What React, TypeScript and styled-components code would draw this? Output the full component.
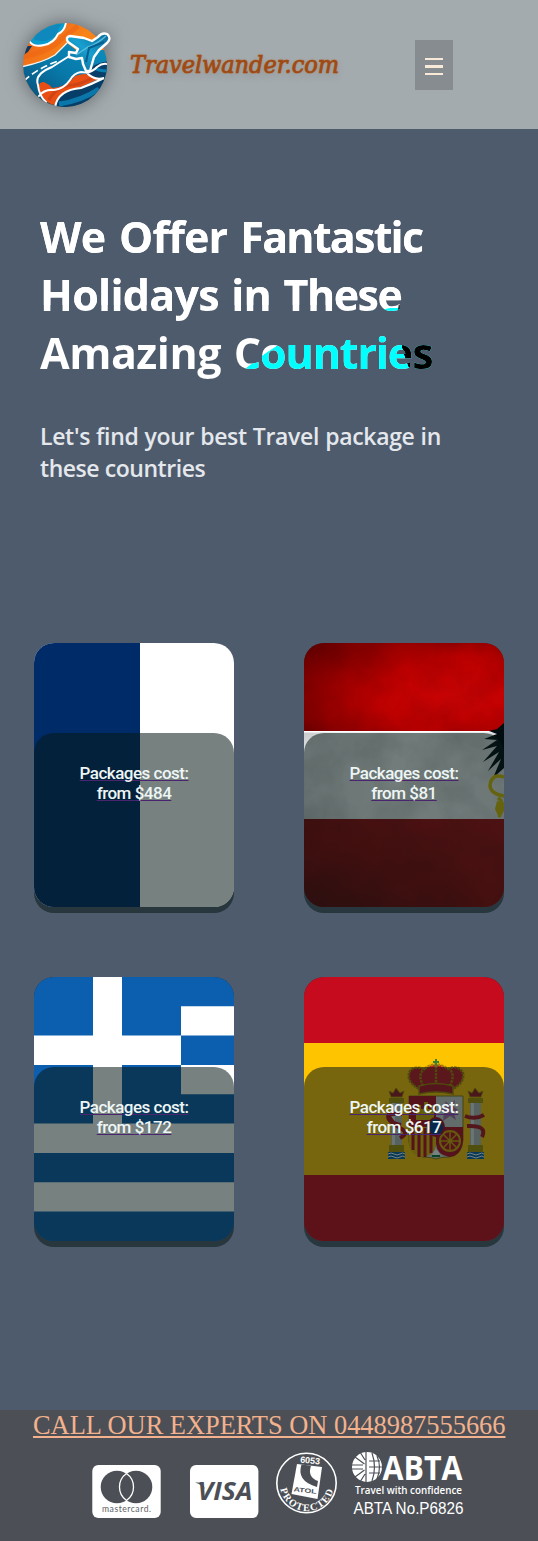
import React from "react";
import styled, { createGlobalStyle } from "styled-components";

const GlobalStyle = createGlobalStyle`
  * { box-sizing: border-box; }
  body { margin: 0; background: #4e5b6c; }
`;

const Page = styled.div`
  display: flex;
  flex-direction: column;
  width: 538px;
  height: 1541px;
  background: #4e5b6c;
  overflow: hidden;
`;

const Header = styled.header`
  display: flex;
  align-items: center;
  flex: none;
  height: 129px;
  padding-left: 20px;
  background: #a4abae;
`;

const LogoMark = styled.svg`
  flex: none;
  width: 92px;
  height: 90px;
  filter: drop-shadow(0 0 9px rgba(50, 55, 60, 0.6));
`;

const Brand = styled.span`
  width: 285px;
  padding-left: 18px;
  font: italic 500 25px/32px "DejaVu Serif", serif;
  font-stretch: condensed;
  letter-spacing: -0.05px;
  color: #9f4a15;
  -webkit-text-stroke: 0.7px #9f4a15;
  text-shadow: 0 0 2px #b8763c, 0 4px 7px rgba(60, 60, 60, 0.2);
  white-space: nowrap;
`;

const MenuButton = styled.button`
  display: flex;
  flex-direction: column;
  align-items: center;
  justify-content: center;
  gap: 5px;
  margin-left: 18px;
  width: 38px;
  height: 50px;
  padding: 4px 0 0;
  border: 0;
  background: #878c90;
`;

const MenuBar = styled.span`
  width: 18px;
  height: 2.4px;
  background: #f8e9d8;
`;

const Hero = styled.section`
  flex: none;
  height: 514px;
  padding: 79px 40px 0;
`;

const Title = styled.h1`
  margin: 0;
  height: 180px;
  font: 700 43px/58px "Open Sans", sans-serif;
  color: transparent;
  background:
    linear-gradient(#fff 97px, transparent 97px),
    radial-gradient(circle 135px at 493px 107px, #000 134.5px, transparent 135px),
    radial-gradient(circle 259px at 373px 358px, #0ff 258.5px, transparent 259px),
    #fff;
  -webkit-background-clip: text;
  background-clip: text;
`;

const Line = styled.span<{ $spacing?: number; $words?: number }>`
  display: block;
  letter-spacing: ${(p) => p.$spacing ?? 0}px;
  word-spacing: ${(p) => p.$words ?? 0}px;
  white-space: nowrap;
`;

const Word = styled.span<{ $spacing: number }>`
  letter-spacing: ${(p) => p.$spacing}px;
`;

const Subtitle = styled.p`
  margin: 32px 0 0;
  font: 600 23px/32px "Open Sans", sans-serif;
  color: #e4e8ec;
`;

const Cards = styled.main`
  display: grid;
  flex: none;
  grid-template-columns: 200px 200px;
  grid-auto-rows: 270px;
  gap: 64px 70px;
  height: 767px;
  padding-left: 34px;
`;

const Card = styled.a`
  display: grid;
  height: 270px;
  border-radius: 20px;
  background: #28363d;
  text-decoration: none;
`;

const Face = styled.div`
  display: grid;
  grid-template-rows: 264px;
  grid-template-columns: 200px;
  height: 264px;
  border-radius: 20px;
  overflow: hidden;
`;

const Flag = styled.svg`
  grid-area: 1 / 1;
  width: 200px;
  height: 264px;
`;

const Price = styled.div`
  grid-area: 1 / 1;
  z-index: 1;
  align-self: end;
  height: 174px;
  padding-top: 30px;
  border-radius: 20px 20px 0 0;
  background: rgba(8, 26, 24, 0.55);
  font: 500 17px/20px Roboto, sans-serif;
  letter-spacing: -0.5px;
  text-align: center;
  color: #edf6f5;
  text-decoration: underline;
  text-decoration-color: #4b2470;
  text-decoration-thickness: 1px;
  text-decoration-skip-ink: none;
`;

const Footer = styled.footer`
  flex: 1;
  background: #4c5056;
`;

const Phone = styled.a`
  display: block;
  margin-left: 33px;
  font: 26.4px/30px "Liberation Serif", serif;
  color: #f3b28d;
  text-decoration: underline;
  white-space: nowrap;
`;

const Badges = styled.div`
  display: flex;
  align-items: flex-start;
  padding: 11px 0 0 92px;
`;

const PayBadge = styled.svg`
  width: 69px;
  height: 54px;
  margin: 14px 29px 0 0;
`;

const Atol = styled.svg`
  width: 62px;
  height: 62px;
  margin: 1px 14px 0 -12px;
`;

const Abta = styled.svg`
  width: 114px;
  height: 70px;
  overflow: visible;
`;

const Logo = () => (
  <LogoMark viewBox="0 0 92 90">
    <defs>
      <clipPath id="globe"><circle cx="45" cy="45" r="42" /></clipPath>
      <linearGradient id="orange" x1="0" y1="0" x2="1" y2="1">
        <stop offset="0" stopColor="#e65518" /><stop offset=".45" stopColor="#f98518" /><stop offset="1" stopColor="#df6b13" />
      </linearGradient>
      <linearGradient id="sea" x1="0" y1="1" x2="1" y2="0">
        <stop offset="0" stopColor="#0a426b" /><stop offset=".5" stopColor="#0878a8" /><stop offset="1" stopColor="#0a8fc0" />
      </linearGradient>
      <linearGradient id="plane" x1="1" y1="0" x2="0" y2="1">
        <stop offset="0" stopColor="#0b6795" /><stop offset=".5" stopColor="#17a0d0" /><stop offset="1" stopColor="#0a5b8b" />
      </linearGradient>
    </defs>
    <g clipPath="url(#globe)">
      <rect width="92" height="90" fill="url(#orange)" />
      <path d="M2 37Q24 33 36 24Q46 15 58 6" fill="none" stroke="#ee6514" strokeWidth="5" opacity=".6" />
      <path d="M0 47Q24 42 35 35L47 23L56 30L92 30V90H0z" fill="url(#sea)" />
      <path d="M0 26H12L8 32L2 36z" fill="#12395c" />
      <path d="M1 47Q24 42 35 35L47 23" fill="none" stroke="#f4f5f2" strokeWidth="1.4" />
      <path d="M6 0H46Q44 12 36 16Q29 26 18 26Q9 25 9 20z" fill="#079dcd" />
      <path d="M14 20Q16 11 25 9Q32 4 42 4Q37 9 38 14Q29 22 21 21z" fill="#1579b0" opacity=".55" />
      <path d="M46 2Q45 11 38 14Q34 23 24 25Q12 28 9 20" fill="none" stroke="#fff" strokeWidth="2" />
      <path d="M4 61Q16 49 38 41" fill="none" stroke="#fff" strokeWidth="1.7" strokeDasharray="7 3.5" />
      <path d="M20 73Q16 62 24 62Q29 64 32 68Q47 67 55 56Q68 51 80 58Q65 66 54 69Q38 73 35 85Q26 84 20 73z" fill="#e94e13" />
      <path d="M29 80Q37 65 54 65Q65 63 75 56" fill="none" stroke="#b83d18" strokeWidth="3" opacity=".55" />
      <path d="M34 90Q38 74 53 70Q68 67 82 58H92V90z" fill="#073e67" />
      <path d="M39 84Q61 81 79 69" fill="none" stroke="#0a76aa" strokeWidth="5" />
      <path d="M64 53Q75 42 90 41V59Q76 60 64 53z" fill="#093e68" />
      <path d="M75 48Q79 51 87 51" stroke="#087eb2" strokeWidth="3" fill="none" />
      <path d="M51 35Q43 40 32 47Q14 54 18 65Q19 76 26 82M19 76Q24 69 34 70Q44 69 50 60Q54 53 61 52Q71 54 77 47Q82 43 87 44M66 52Q74 61 84 58Q72 64 61 68Q37 70 35 88" fill="none" stroke="#fff" strokeWidth="2" strokeLinecap="round" />
    </g>
    <path d="M87 14Q82 12 78 17L72 21L64 18L50 16Q45 17 48 22L58 29L56 33L49 32L49 37L56 39L62 38L63 44L66 51H70L72 44L74 37L79 30L87 23Q92 18 87 14z" fill="url(#plane)" stroke="#fff" strokeWidth="2.4" strokeLinejoin="round" />
    <path d="M86 16Q77 24 68 27L56 35" stroke="#58bcdd" strokeWidth="1.5" fill="none" />
    <path d="M84 22L69 28L66 42" stroke="#075f8e" strokeWidth="2" fill="none" />
  </LogoMark>
);

const FranceFlag = () => (
  <Flag viewBox="0 0 200 264">
    <rect width="200" height="264" fill="#fff" /><rect width="106" height="264" fill="#002b69" />
  </Flag>
);

const AustriaFlag = () => (
  <Flag viewBox="0 0 200 264">
    <defs>
      <radialGradient id="redCloth" cx="75%" cy="60%" r="90%">
        <stop offset="0" stopColor="#d00405" /><stop offset=".5" stopColor="#b80000" /><stop offset="1" stopColor="#6c0000" />
      </radialGradient>
      <linearGradient id="lowCloth" x1="1" y1="0" x2="0" y2="1">
        <stop offset="0" stopColor="#a8090f" /><stop offset=".5" stopColor="#900507" /><stop offset="1" stopColor="#600407" />
      </linearGradient>
      <linearGradient id="paper"><stop offset="0" stopColor="#dfe0e1" /><stop offset=".5" stopColor="#f5f5f5" /><stop offset="1" stopColor="#e8e9ea" /></linearGradient>
      <filter id="grain"><feTurbulence type="fractalNoise" baseFrequency=".025" numOctaves="5" seed="8" /><feColorMatrix values="0 0 0 0 0 0 0 0 0 0 0 0 0 0 0 .75 0 0 0 -.22" /></filter>
    </defs>
    <rect width="200" height="88" fill="url(#redCloth)" />
    <rect y="88" width="200" height="88" fill="url(#paper)" />
    <rect y="176" width="200" height="88" fill="url(#lowCloth)" />
    <rect width="200" height="264" filter="url(#grain)" opacity=".32" />
    <path d="M0 88.7H200" stroke="#fff" strokeWidth="1.5" />
    <path d="M200 80L193 86L185 88L193 91L180 96L193 97L178 107L193 103L179 119L195 109L184 128L197 116L189 135L200 125z" fill="#000b10" />
    <path d="M200 134Q187 130 186 143Q187 151 200 153M194 155Q202 160 195 174" fill="none" stroke="#d8bd00" strokeWidth="3.5" />
    <path d="M193 158L200 160V168L195 175L191 166z" fill="#d8bd00" />
  </Flag>
);

const GreeceFlag = () => (
  <Flag viewBox="0 0 200 264">
    <rect width="200" height="264" fill="#0c5eae" />
    <path d="M147 29.3H200V58.6H147zM147 88H200V117.3H147zM0 146.6H200V176H0zM0 205.3H200V234.6H0zM59 0H88V147H59zM0 58.6H147V88H0z" fill="#fff" />
  </Flag>
);

const Pillar = ({ x }: { x: number }) => (
  <g transform={`translate(${x} 111)`}>
    <path d="M3 12H14V59H3z" fill="#b9bbb8" /><path d="M4 14H7V58H4z" fill="#e2e2df" />
    <path d="M1 10H16V15H1zM1 57H16V64H1z" fill="#aa9100" />
    <path d="M0 64H17V71H0z" fill="#0b63a6" />
    <path d="M0 66Q3 64 6 66T12 66T17 66M0 69Q3 67 6 69T12 69T17 69" stroke="#fff" fill="none" />
    <path d="M3 9L1 3L5 5L8 0L12 5L16 3L14 9z" fill="#9c1421" stroke="#a98b00" />
  </g>
);

const SpainFlag = () => (
  <Flag viewBox="0 0 200 264">
    <rect width="200" height="264" fill="#c60b1e" /><rect y="66" width="200" height="132" fill="#ffc400" />
    <Pillar x={84} /><Pillar x={163} />
    <path d="M84 138Q89 147 96 151Q106 156 96 161M98 137L85 137Q81 145 97 148" fill="none" stroke="#ae1320" strokeWidth="4" />
    <path d="M161 139Q171 143 180 138M163 149Q184 148 178 160" fill="none" stroke="#ae1320" strokeWidth="4" />
    <path d="M105 119H159V163Q158 179 145 180Q136 180 132 182Q127 180 119 180Q107 178 105 165z" fill="#d0d0d0" stroke="#8a7812" />
    <path d="M105 119H132V150H105zM132 150H159V164Q157 179 145 180Q133 178 132 167z" fill="#b80d20" />
    <path d="M105 150H132V168Q130 179 118 180Q106 178 105 166z" fill="#e2b500" />
    <path d="M109 151V173M115 151V180M121 151V180M127 151V176" stroke="#b80d20" strokeWidth="3" />
    <path d="M112 143V132H114V128H117V132H120V125H124V132H127V128H130V143z" fill="#d4aa00" />
    <path d="M139 144L140 135L137 132L142 129L141 124L146 128L151 123L150 130L154 133L150 136L152 143L146 139z" fill="#ad6ba5" />
    <circle cx="146" cy="164" r="10" fill="none" stroke="#d2a500" strokeWidth="2" />
    <path d="M136 164H156M146 154V174M139 157L153 171M153 157L139 171" stroke="#d2a500" strokeWidth="1.5" />
    <ellipse cx="132" cy="150" rx="8" ry="9" fill="#083b87" stroke="#a70c23" strokeWidth="2" />
    <path d="M128 177L132 172L136 177L132 180z" fill="#fff" /><path d="M128 179H136" stroke="#087832" strokeWidth="2" />
    <path d="M115 112Q101 104 106 94Q111 88 120 92Q132 83 144 92Q154 87 159 96Q161 105 149 112z" fill="#bf1523" />
    <path d="M115 112Q101 104 106 94Q111 88 120 92Q132 83 144 92Q154 87 159 96Q161 105 149 112M119 109Q113 96 121 92M132 109V87M146 109Q152 96 144 91" fill="none" stroke="#a88400" strokeWidth="2.5" strokeDasharray="2.5 1" />
    <path d="M115 109Q132 104 149 109V117Q132 113 115 117z" fill="#b11323" stroke="#a88400" strokeWidth="1.5" />
    <path d="M132 82V90M129 85H135" stroke="#398137" strokeWidth="2" />
  </Flag>
);

const MastercardBadge = () => (
  <PayBadge viewBox="0 0 69 54">
    <rect x="0.3" width="68.4" height="53" rx="6" fill="#fff" />
    <circle cx="25" cy="22" r="16.3" fill="#4c5056" /><circle cx="44" cy="22" r="16.3" fill="#4c5056" />
    <path d="M34.5 8.5A16.5 16.5 0 0 1 34.5 35.5A16.5 16.5 0 0 1 34.5 8.5z" fill="#4c5056" stroke="#fff" strokeWidth="1.3" />
    <text x="10" y="46.5" textLength="49" fontFamily="Lato" fontSize="8.6" fill="#5d6165">mastercard.</text>
  </PayBadge>
);

const VisaBadge = () => (
  <PayBadge viewBox="0 0 69 54">
    <rect width="68.4" height="53" rx="6" fill="#fff" />
    <path d="M5 17.5H12L15 24L11 20.5Q9 18.5 5 17.5z" fill="#4c5056" />
    <text x="7.5" y="35" textLength="55" lengthAdjust="spacingAndGlyphs" fontFamily="Open Sans" fontWeight="700" fontStyle="italic" fontSize="25" fill="#4c5056">VISA</text>
  </PayBadge>
);

const AtolBadge = () => (
  <Atol viewBox="0 0 62 62">
    <defs><path id="arc" d="M4 32A27 27 0 0 0 58 32" /></defs>
    <circle cx="30.5" cy="31" r="29.7" fill="none" stroke="#fff" strokeWidth="1.6" />
    <path d="M21 12L46 15L41.5 47L15.5 42z" fill="#fff" />
    <path d="M25.5 12.5Q20 29 41 35L42 29Q31 25 35 13.7z" fill="#4c5056" />
    <text x="24" y="11.5" transform="rotate(6 33 10)" fontFamily="Liberation Sans" fontSize="9" fontWeight="700" fill="#fff">6053</text>
    <text x="17.5" y="40.5" transform="rotate(6 29 39)" textLength="23" lengthAdjust="spacingAndGlyphs" fontFamily="Liberation Sans" fontSize="6.3" fontWeight="700" fill="#4c5056">ATOL</text>
    <text fontFamily="Liberation Serif" fontSize="10" fontWeight="700" fill="#fff"><textPath href="#arc" startOffset="5" textLength="73">PROTECTED</textPath></text>
  </Atol>
);

const AbtaBadge = () => (
  <Abta viewBox="0 0 114 70">
    <circle cx="15" cy="16" r="15" fill="#fff" />
    <path d="M14 0V32M0 14H11M0 18H11M3 6L12.5 13M8 1L13 9M3 26L12.5 19M8 31L13 23M17 10H28M17 16H30M17 22H28M20 2Q25 16 20 30M25 5Q30 16 25 28" fill="none" stroke="#4c5056" strokeWidth="1.2" />
    <text x="30.5" y="28.5" textLength="80" lengthAdjust="spacingAndGlyphs" fontFamily="Open Sans" fontWeight="700" fontSize="34" fill="#fff">ABTA</text>
    <text x="3" y="43" textLength="107" lengthAdjust="spacingAndGlyphs" fontFamily="Open Sans" fontWeight="600" fontSize="10.5" fill="#fff">Travel with confidence</text>
    <text x="1.5" y="62.5" textLength="110" lengthAdjust="spacingAndGlyphs" fontFamily="Liberation Sans" fontSize="16" fill="#fff">ABTA No.P6826</text>
  </Abta>
);

const offers = [
  { Flag: FranceFlag, price: "$484" },
  { Flag: AustriaFlag, price: "$81" },
  { Flag: GreeceFlag, price: "$172" },
  { Flag: SpainFlag, price: "$617" },
];

export default function App() {
  return (
    <>
      <GlobalStyle />
      <Page>
        <Header>
          <Logo />
          <Brand>Travelwander.com</Brand>
          <MenuButton aria-label="Menu"><MenuBar /><MenuBar /><MenuBar /></MenuButton>
        </Header>
        <Hero>
          <Title>
            <Line $words={3}><Word $spacing={-0.7}>We </Word><Word $spacing={-0.9}>Offer </Word><Word $spacing={-1.75}>Fantastic</Word></Line>
            <Line $words={2}><Word $spacing={-0.75}>Holidays in </Word><Word $spacing={-1.5}>These</Word></Line>
            <Line $words={2}><Word $spacing={-0.5}>Amazing </Word><Word $spacing={-1.1}>Countries</Word></Line>
          </Title>
          <Subtitle>
            <Line $spacing={-0.32} $words={0.4}>Let's find your best Travel package in</Line>
            <Line $spacing={-0.45}>these countries</Line>
          </Subtitle>
        </Hero>
        <Cards>
          {offers.map(({ Flag: Picture, price }) => (
            <Card key={price}>
              <Face>
                <Picture />
                <Price>Packages cost:<br />from {price}</Price>
              </Face>
            </Card>
          ))}
        </Cards>
        <Footer>
          <Phone>CALL OUR EXPERTS ON 0448987555666</Phone>
          <Badges>
            <MastercardBadge />
            <VisaBadge />
            <AtolBadge />
            <AbtaBadge />
          </Badges>
        </Footer>
      </Page>
    </>
  );
}
